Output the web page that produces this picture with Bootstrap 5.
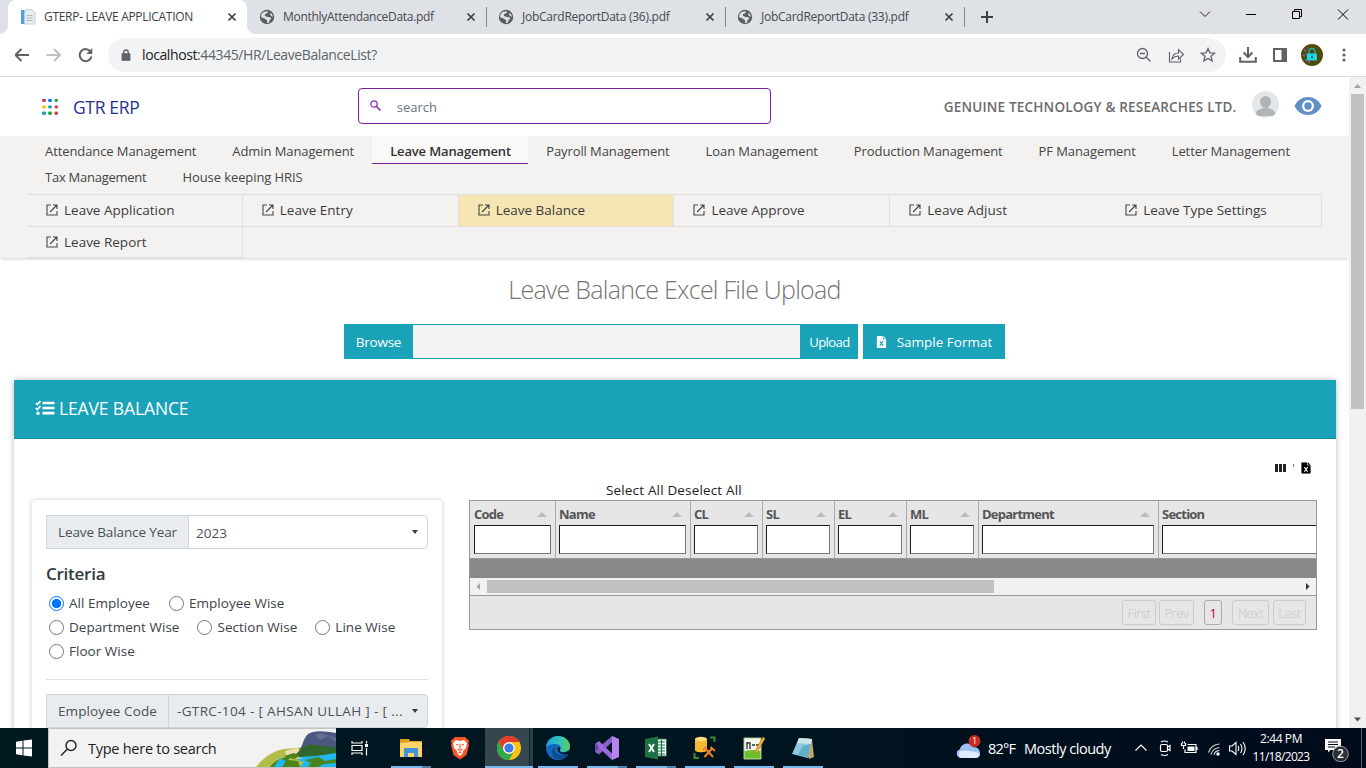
<!DOCTYPE html>
<html lang="en">
<head>
<meta charset="utf-8">
<meta name="viewport" content="width=device-width, initial-scale=1">
<title>GTERP- LEAVE APPLICATION</title>
<link href="https://cdn.jsdelivr.net/npm/bootstrap@5.3.0/dist/css/bootstrap.min.css" rel="stylesheet">
<style>
:root{--teal:#19a2b8}
body{font-family:"Open Sans","Noto Sans",sans-serif;height:768px;overflow:hidden;color:#333;font-size:13.5px;line-height:20px;background:#fff}
svg{display:block;flex:none}
.nowr{white-space:nowrap}
/* browser chrome */
.tabstrip{height:34px;background:#dee1e6;padding-left:8px}
.btab{width:239px;height:34px;padding:0 7px 0 12px;font-size:12px;letter-spacing:-.3px;color:#45494d;position:relative}
.btab.on{background:#fff;border-radius:8px 8px 0 0;color:#3c4043}
.btab.on::before,.btab.on::after{content:"";position:absolute;bottom:0;width:8px;height:8px;background:radial-gradient(circle at 0 0,transparent 7.5px,#fff 8px)}
.btab.on::before{left:-8px}
.btab.on::after{right:-8px;background:radial-gradient(circle at 100% 0,transparent 7.5px,#fff 8px)}
.btab.sep::after{content:"";position:absolute;right:-1px;top:7px;width:1px;height:20px;background:#85898e}
.winbtn{width:46px;height:28px}
.addressbar{height:43px;border-bottom:1px solid #dadce0}
.omni{margin-left:14px;width:1118px;height:34px;border-radius:17px;background:#f1f3f4;padding:0 10px 0 12px;font-size:14px;letter-spacing:-.4px;color:#5f6368}
.omni b{font-weight:400;color:#202124}
/* page */
.viewport{height:651px}
.vscroll{width:17px;background:#f1f1f1}
.vthumb{width:13px;height:315px;background:#c1c1c1}
.brand{font-size:17.5px;letter-spacing:-.35px;color:#27348b;margin-left:15px}
.topbar{height:59px}
.searchbox{width:413px;height:36px;border:1px solid #7b1fa2;border-radius:4px;padding-left:11px;margin:-2px 0 0 218.500px;font-size:13px;color:#6c757d}
.company{font-weight:600;letter-spacing:.19px;color:#6b6b6b;margin-left:173px;padding-top:1px}
.avatar{width:27px;height:27px;border-radius:50%;background:#e4e6e7;overflow:hidden}
.ribbon{background:#f3f2f1;height:122px;padding:0 27px;box-shadow:0 2px 3px -1px rgba(0,0,0,.2)}
.mods{padding-top:2px;height:58px;font-size:13px;letter-spacing:-.09px}
.mods a{height:26px;padding:3px 18px 0;color:#444;text-decoration:none;line-height:20px}
.mods a.on{height:28px;width:156px;margin-top:-2px;padding:5px 17px 0 18px;background:#faf9f8;border-bottom:1px solid #7b1fa2;font-weight:600;letter-spacing:-.15px;color:#333}
.mods a.tight{letter-spacing:-.25px}
.subs{display:grid;grid-template-columns:repeat(6,1fr);border-top:1px solid #e1dfdd}
.subs a{height:32px;padding:0 0 1px 19px;color:#3c3c3c;text-decoration:none;border-right:1px solid #e1dfdd;border-bottom:1px solid #e1dfdd}
.subs a svg{margin-right:2px}
.subs a:nth-child(n+7){height:31px;padding-bottom:0}
.subs a.on{background:#f5e6b3}
.bigtitle{font-size:25px;font-weight:300;letter-spacing:-.75px;color:#757575;line-height:34px;margin:14px 0 18px}
.tealbtn{background:var(--teal);color:#fff;height:35px;border-radius:0;border:0;padding:0;font-size:13.5px;line-height:20px;display:flex;align-items:center;justify-content:center}
.filefield{width:387px;height:35px;background:#f3f3f3;border:1px solid var(--teal);border-width:1px 0}
.maincard{margin:21px 13px 0 14px;height:400px;box-shadow:0 0 6px rgba(0,0,0,.28)}
.maincard .head{background:var(--teal);border-bottom:1px solid #1790a4;height:59px;padding:0 0 2px 21px;color:#fff;font-size:17.5px;letter-spacing:-.13px}
.filters{width:410px;height:300px;margin:61px 0 0 18px;padding:15px 14px;border-radius:4px;box-shadow:0 0 5px rgba(0,0,0,.22)}
.igroup{height:34px;border:1px solid #ced4da;border-radius:0 4px 4px 0;color:#495057}
.igroup .lab{background:#e9ecef;border-right:1px solid #ced4da;padding-left:11px}
.caret{width:0;height:0;border:3.5px solid transparent;border-top:4px solid #343a40;border-bottom:0;margin-right:1px}
.crit{font-size:17px;font-weight:600;letter-spacing:-.25px;color:#333a40;margin:13px 0 5px;line-height:24px}
.optrow{height:24px;padding-left:3px;color:#3d4247;letter-spacing:.03px}
.opt{display:flex;align-items:center;gap:5px}
.opt i{width:15px;height:15px;border:1px solid #767676;border-radius:50%;background:#fff}
.opt i.on{border-color:#0075ff;background:radial-gradient(circle,#0075ff 4.3px,#fff 5px)}
.gridbox{width:848px;height:130px;border:1px solid #999;background:#e6e6e6;overflow:hidden}
.gcol{flex:none;height:57px;border-right:1px solid #aaa;padding:3px 4px 0 3px;font-size:13px;font-weight:700;letter-spacing:-.76px;color:#555}
.gcol:first-child{padding-left:4px}
.gcol .inp{height:29px;margin-top:1px;background:#fff;border:1px solid #767676;border-top-color:#1d1d1d;border-left-color:#1d1d1d}
.sortup{width:0;height:0;border:5px solid transparent;border-bottom:5px solid #bbb;border-top:0;margin-right:4px;margin-top:1px}
.gempty{height:20px;background:#888;border-top:1px solid #999}
.ghs{height:17px;background:#f1f1f1}
.ghs .th{width:507px;height:13px;background:#c1c1c1}
.pgb{height:25px;border:1px solid #ccc;border-radius:3px;color:#c4c4c4;font-size:13px;font-weight:300;letter-spacing:-.4px;display:flex;align-items:center;justify-content:center}
.pgb.on{border-color:#aaa;color:#d00032;font-weight:400}
/* taskbar */
.taskbar{height:40px;background:linear-gradient(90deg,#001a22,#00141f 60%,#000a1b);color:#fff}
.tsearch{width:288px;height:40px;background:#f2f2f2;border:1px solid #c4c4c4;border-right:0;color:#222;font-size:14.5px;letter-spacing:-.26px;padding-left:11px;overflow:hidden}
.tapp{width:40px;height:40px;margin-left:9px;position:relative;display:flex;align-items:center;justify-content:center}
.tapp.run::after{content:"";position:absolute;left:0;right:0;bottom:0;height:2px;background:#76b9ed}
.tapp.multi::after{background:linear-gradient(90deg,#76b9ed 31px,#4f80a8 31px)}
.tapp.cur{width:48px;margin-left:5px;margin-right:-4px;background:linear-gradient(90deg,#35464e 44px,#16282f 44px,#16282f 45px,#2c3d46 45px)}
.clock{width:60px;font-size:12px;line-height:18px;text-align:center;letter-spacing:-.67px}
</style>
</head>
<body class="d-flex flex-column">
<svg width="0" height="0" class="position-absolute">
  <defs>
    <symbol id="globe" viewBox="0 0 16 16"><circle cx="8" cy="8" r="7.2" fill="#5a5e62"/><path d="M3 4.500C4.500 2.800 6.500 2 9 2.200L8.300 4.200 6.200 5l-.4 1.800L8.500 8l2.800.2 1 1.500-1.600 1.400-.7 2.400-2 .7.100-3L5 9.300 2.200 8.200C2 6.800 2.300 5.500 3 4.500zM10.500 4.300l2.300.4 1.300 3-2.100-.8z" fill="#dee1e6"/></symbol>
    <symbol id="tx" viewBox="0 0 16 16"><path d="M4.500 4.500l7 7M11.500 4.500l-7 7" stroke="#3c4043" stroke-width="1.700"/></symbol>
    <symbol id="ext" viewBox="0 0 12 12"><path d="M5 1H1v10h10V7M7 1h4v4M11 1L4 8" fill="none" stroke="#444" stroke-width="1.100"/></symbol>
    <symbol id="xls" viewBox="0 0 12 14"><path d="M1 0h6.500v3.800H11.500V13q0 1-1 1H1.500q-1 0-1-1V.8Q.5 0 1 0zM8.300 0l3.200 3H8.300z" fill="currentColor"/></symbol>
  </defs>
</svg>

<div class="tabstrip d-flex">
  <div class="btab on d-flex align-items-center">
    <svg width="16" height="16" viewBox="0 0 16 16"><rect x="1" y="1" width="3.500" height="14" fill="#4da3dc"/><path d="M6 .5h6l3 3V15H4.500V4z" fill="#e9eef2" stroke="#b9c1c8" stroke-width=".7"/><path d="M6.500 6.500h6M6.500 9h6M6.500 11.500h6" stroke="#a9b8c4"/></svg>
    <span class="nowr ms-2 me-auto">GTERP- LEAVE APPLICATION</span><svg width="16" height="16"><use href="#tx"/></svg></div>
  <div class="btab sep d-flex align-items-center"><svg width="16" height="16"><use href="#globe"/></svg><span class="nowr ms-2 me-auto">MonthlyAttendanceData.pdf</span><svg width="16" height="16"><use href="#tx"/></svg></div>
  <div class="btab sep d-flex align-items-center"><svg width="16" height="16"><use href="#globe"/></svg><span class="nowr ms-2 me-auto" style="letter-spacing:-.26px">JobCardReportData (36).pdf</span><svg width="16" height="16"><use href="#tx"/></svg></div>
  <div class="btab sep d-flex align-items-center"><svg width="16" height="16"><use href="#globe"/></svg><span class="nowr ms-2 me-auto" style="letter-spacing:-.26px">JobCardReportData (33).pdf</span><svg width="16" height="16"><use href="#tx"/></svg></div>
  <svg class="mt-2 ms-3" width="16" height="18" viewBox="0 0 16 18"><path d="M7 3v12M1 9h12" stroke="#3c4043" stroke-width="2"/></svg>
  <div class="d-flex ms-auto">
    <div class="winbtn"><svg width="46" height="28" viewBox="0 0 46 28"><path d="M18 11.500l5 5 5-5" fill="none" stroke="#222"/></svg></div>
    <div class="winbtn"><svg width="46" height="28" viewBox="0 0 46 28"><path d="M18 14.500h10" stroke="#000"/></svg></div>
    <div class="winbtn"><svg width="46" height="28" viewBox="0 0 46 28"><path d="M18.500 11.500h7v7h-7zM20.500 11V9.500h7v7H26" fill="none" stroke="#000"/></svg></div>
    <div class="winbtn"><svg width="46" height="28" viewBox="0 0 46 28"><path d="M18 9.500l10 10M28 9.500l-10 10" stroke="#000"/></svg></div>
  </div>
</div>

<div class="addressbar d-flex align-items-center">
  <svg style="margin-left:15px;margin-right:1px" width="78" height="20" viewBox="15.500 0 78 20"><path d="M29.500 10H16M22 4l-6 6 6 6" fill="none" stroke="#5f6368" stroke-width="2"/><path d="M47 10h13M54.500 4l6 6-6 6" fill="none" stroke="#bdc1c6" stroke-width="2"/><path d="M91.300 7A6 6 0 1 0 92 11.500" fill="none" stroke="#5f6368" stroke-width="2"/><path d="M92.800 3v6h-6z" fill="#5f6368"/></svg>
  <div class="omni d-flex align-items-center">
    <svg width="12" height="12" viewBox="0 0 12 14"><path d="M1.500 5.500h9V13h-9zM3.300 5.500V3.700a2.700 2.700 0 0 1 5.400 0v1.800" fill="#5f6368" stroke="#5f6368" stroke-width="1.300"/><path d="M4.200 5V3.700a1.800 1.800 0 0 1 3.600 0V5z" fill="#f1f3f4"/></svg>
    <span class="nowr me-auto" style="margin-left:10px"><b>localhost</b>:44345/HR/LeaveBalanceList?</span>
    <svg width="80" height="18" viewBox="0 0 80 18" fill="none" stroke="#5f6368" stroke-width="1.300"><circle cx="6.500" cy="7.500" r="5"/><path d="M10.200 11.200l4.300 4.300M4 7.500h5"/><path d="M33.500 6v10h11v-3.500M36 13c.5-4 3-6 6.500-6V3.500l5 5-5 4.500V10c-2.500-.1-4.500.7-6.500 3z" stroke-width="1.100"/><path d="M72 2.500l1.900 4.300 4.700.4-3.600 3.100 1.100 4.600L72 12.500l-4.100 2.400 1.100-4.600-3.600-3.100 4.700-.4z"/></svg>
  </div>
  <svg style="margin-left:13px" width="18" height="18" viewBox="0 0 18 18" fill="none" stroke="#5f6368" stroke-width="2"><path d="M9 1v9.500M4.500 6.500L9 11l4.500-4.500M1.200 11v4.800h15.600V11"/></svg>
  <svg class="ms-3" width="14" height="14" viewBox="0 0 14 14"><path d="M1 1h12v12H1z" fill="none" stroke="#5f6368" stroke-width="2"/><path d="M8.500 1H13v12H8.500z" fill="#5f6368"/></svg>
  <svg style="margin-left:14px" width="22" height="22" viewBox="0 0 22 22"><circle cx="11" cy="11" r="11" fill="#4f4a0a"/><path d="M3 6l2 1M2 11l2 1M4 15l2 2M7 18h2M6 4h1M5 10h1" stroke="#7d66b0" stroke-width="1.500"/><path d="M8 10V7.500a3 3 0 0 1 6 0V10" fill="none" stroke="#21a7b5" stroke-width="1.500"/><rect x="6" y="9.500" width="10" height="7" rx="1" fill="#16dcef"/><path d="M11 11.500v3" stroke="#184a52" stroke-width="1.500"/></svg>
  <svg style="margin-left:18px" width="6" height="16" viewBox="0 0 6 16" fill="#5f6368"><circle cx="3" cy="3" r="1.600"/><circle cx="3" cy="8" r="1.600"/><circle cx="3" cy="13" r="1.600"/></svg>
</div>

<div class="viewport d-flex overflow-hidden">
<main class="flex-grow-1 overflow-hidden">
  <div class="topbar d-flex align-items-center">
    <svg style="margin-left:42px" width="16" height="16" viewBox="0 0 16 16"><rect x="0" y="0" width="4" height="3" rx="1.400" fill="#dc3545"/><rect x="6" y="0" width="4" height="3" rx="1.400" fill="#007bff"/><rect x="12.500" y="0" width="3.500" height="3" rx="1.400" fill="#28a745"/><rect x="0" y="6.500" width="4" height="3" rx="1.400" fill="#ffc107"/><rect x="6" y="6.500" width="4" height="3" rx="1.400" fill="#17a2b8"/><rect x="12.500" y="6.500" width="3.500" height="3" rx="1.400" fill="#dc3545"/><rect x="0" y="12.500" width="4" height="3.500" rx="1.400" fill="#17a2b8"/><rect x="6" y="12.500" width="4" height="3.500" rx="1.400" fill="#28a745"/><rect x="12.500" y="12.500" width="3.500" height="3.500" rx="1.400" fill="#dc3545"/></svg>
    <span class="brand nowr">GTR ERP</span>
    <div class="searchbox d-flex align-items-center">
      <svg width="11" height="11" viewBox="0 0 11 11" fill="none" stroke="#8e35b5" stroke-width="1.300"><circle cx="4" cy="4" r="3.200"/><path d="M6.400 6.400l4 4" stroke-width="1.600"/></svg>
      <span style="margin-left:16px;padding-top:2px">search</span>
    </div>
    <span class="company nowr">GENUINE TECHNOLOGY &amp; RESEARCHES LTD.</span>
    <div class="avatar" style="margin:-5px 0 0 15px"><svg width="27" height="27" viewBox="0 0 27 27"><ellipse cx="13.500" cy="11" rx="5.500" ry="6" fill="#aeb4b8"/><path d="M4 25v-3c0-3 4-3.500 7-5h5c3 1.500 7 2 7 5v3z" fill="#aeb4b8"/></svg></div>
    <svg style="margin:-1px 0 0 15px" width="28" height="20" viewBox="0 0 28 20"><path d="M.5 10C6-2 22-2 27.500 10 22 22 6 22 .5 10z" fill="#5f8fc4"/><circle cx="14" cy="10" r="6" fill="#fff"/><circle cx="14" cy="10" r="3.700" fill="#5f8fc4"/></svg>
  </div>
  <nav class="ribbon">
    <div class="mods d-flex flex-wrap align-content-start nowr">
      <a href="#">Attendance Management</a><a href="#">Admin Management</a><a href="#" class="on">Leave Management</a><a href="#">Payroll Management</a><a href="#">Loan Management</a><a href="#">Production Management</a><a href="#">PF Management</a><a href="#">Letter Management</a><a href="#" class="tight">Tax Management</a><a href="#">House keeping HRIS</a>
    </div>
    <div class="subs">
      <a href="#" class="d-flex align-items-center gap-1"><svg width="12" height="12"><use href="#ext"/></svg>Leave Application</a>
      <a href="#" class="d-flex align-items-center gap-1"><svg width="12" height="12"><use href="#ext"/></svg>Leave Entry</a>
      <a href="#" class="on d-flex align-items-center gap-1"><svg width="12" height="12"><use href="#ext"/></svg>Leave Balance</a>
      <a href="#" class="d-flex align-items-center gap-1"><svg width="12" height="12"><use href="#ext"/></svg>Leave Approve</a>
      <a href="#" class="d-flex align-items-center gap-1 border-end-0"><svg width="12" height="12"><use href="#ext"/></svg>Leave Adjust</a>
      <a href="#" class="d-flex align-items-center gap-1"><svg width="12" height="12"><use href="#ext"/></svg>Leave Type Settings</a>
      <a href="#" class="d-flex align-items-center gap-1"><svg width="12" height="12"><use href="#ext"/></svg>Leave Report</a>
    </div>
  </nav>
  <h1 class="bigtitle text-center nowr">Leave Balance Excel File Upload</h1>
  <div class="d-flex justify-content-center">
    <button class="tealbtn" style="width:69px;letter-spacing:-.25px">Browse</button>
    <div class="filefield"></div>
    <button class="tealbtn" style="width:58px;font-size:13px;letter-spacing:-.55px;padding-left:1px">Upload</button>
    <button class="tealbtn" style="width:142px;margin-left:5px"><svg width="11" height="12" viewBox="0 0 12 14" style="margin-right:10px"><use href="#xls"/><path d="M4 6l4 5.500M8 6l-4 5.500" stroke="#19a2b8" stroke-width="1.200"/></svg>Sample Format</button>
  </div>
  <section class="maincard">
    <div class="head d-flex align-items-center">
      <svg width="20" height="16" viewBox="0 0 20 16" fill="none" stroke="#fff"><path d="M7.500 3h12M7.500 8h12M7.500 13.200h12" stroke-width="2.700"/><path d="M.8 3l1.500 1.500L5.500 1M.8 8l1.500 1.500L5.500 6" stroke-width="1.700"/><circle cx="3" cy="13.200" r="1.700" fill="#fff" stroke="none"/></svg>
      <span class="nowr" style="margin-left:4px">LEAVE BALANCE</span>
    </div>
    <div class="d-flex">
      <aside class="filters">
        <div class="igroup d-flex align-items-stretch">
          <div class="lab d-flex align-items-center nowr" style="width:142px;letter-spacing:-.12px">Leave Balance Year</div>
          <div class="d-flex align-items-center flex-grow-1 px-2"><span class="me-auto" style="margin-left:-1px;padding-top:1px">2023</span><span class="caret"></span></div>
        </div>
        <h2 class="crit">Criteria</h2>
        <div class="optrow d-flex"><div class="opt"><i class="on"></i>All Employee</div><div class="opt" style="margin-left:19px"><i></i>Employee Wise</div></div>
        <div class="optrow d-flex"><div class="opt"><i></i>Department Wise</div><div class="opt" style="margin-left:18px"><i></i>Section Wise</div><div class="opt" style="margin-left:18px"><i></i>Line Wise</div></div>
        <div class="optrow d-flex"><div class="opt"><i></i>Floor Wise</div></div>
        <div class="border-top" style="margin:16px 0 14px"></div>
        <div class="igroup d-flex align-items-stretch" style="background:#e9ecef">
          <div class="lab d-flex align-items-center nowr" style="width:122px;letter-spacing:.1px">Employee Code</div>
          <div class="d-flex align-items-center flex-grow-1 px-2 nowr"><span class="me-auto" style="letter-spacing:.35px">-GTRC-104 - [ AHSAN ULLAH ] - [ ...</span><span class="caret"></span></div>
        </div>
      </aside>
      <div style="margin:22px 0 0 27px">
        <div class="d-flex justify-content-end align-items-center" style="height:13px;padding-right:6px">
          <svg width="36" height="12" viewBox="0 0 36 12"><path d="M0 2h3v8H0zM4 2h3v8H4zM8 2h3v8H8z" fill="#222"/><path d="M18.500 2v3" stroke="#777"/><svg x="26" width="10" height="12" viewBox="0 0 12 14" color="#000"><use href="#xls"/><path d="M4 6l4 5.500M8 6l-4 5.500" stroke="#fff" stroke-width="1.300"/></svg></svg>
        </div>
        <div class="nowr" style="margin:6px 0 0 137px;letter-spacing:.16px;color:#222">Select All Deselect All</div>
        <div class="gridbox">
          <div class="d-flex">
            <div class="gcol" style="width:86px"><div class="d-flex align-items-center justify-content-between">Code<span class="sortup"></span></div><div class="inp"></div></div>
            <div class="gcol" style="width:135px"><div class="d-flex align-items-center justify-content-between">Name<span class="sortup"></span></div><div class="inp"></div></div>
            <div class="gcol" style="width:72px"><div class="d-flex align-items-center justify-content-between">CL<span class="sortup"></span></div><div class="inp"></div></div>
            <div class="gcol" style="width:72px"><div class="d-flex align-items-center justify-content-between">SL<span class="sortup"></span></div><div class="inp"></div></div>
            <div class="gcol" style="width:72px"><div class="d-flex align-items-center justify-content-between">EL<span class="sortup"></span></div><div class="inp"></div></div>
            <div class="gcol" style="width:72px"><div class="d-flex align-items-center justify-content-between">ML<span class="sortup"></span></div><div class="inp"></div></div>
            <div class="gcol" style="width:180px"><div class="d-flex align-items-center justify-content-between">Department<span class="sortup"></span></div><div class="inp"></div></div>
            <div class="gcol" style="width:180px"><div class="d-flex align-items-center justify-content-between">Section<span class="sortup"></span></div><div class="inp"></div></div>
          </div>
          <div class="gempty"></div>
          <div class="ghs d-flex align-items-center">
            <svg width="17" height="17" viewBox="0 0 17 17"><path d="M10 5v7L6.500 8.500z" fill="#a3a3a3"/></svg><div class="th"></div>
            <svg class="ms-auto" width="17" height="17" viewBox="0 0 17 17"><path d="M7 5v7l3.500-3.500z" fill="#333"/></svg>
          </div>
          <div class="d-flex justify-content-end" style="height:34px;border-top:1px solid #999;padding:4px 10px">
            <span class="pgb" style="width:34px">First</span><span class="pgb" style="width:35px;margin-left:3px">Prev</span><span class="pgb on" style="width:18px;margin-left:10px">1</span><span class="pgb" style="width:37px;margin-left:10px">Next</span><span class="pgb" style="width:33px;margin-left:4px">Last</span>
          </div>
        </div>
      </div>
    </div>
  </section>
</main>
<div class="vscroll d-flex flex-column align-items-center flex-shrink-0">
  <svg width="17" height="17" viewBox="0 0 17 17"><path d="M5 11h7L8.500 7z" fill="#a3a3a3"/></svg>
  <div class="vthumb"></div>
  <svg class="mt-auto" width="17" height="17" viewBox="0 0 17 17"><path d="M5 6.500h7l-3.500 4z" fill="#505050"/></svg>
</div>
</div>

<footer class="taskbar d-flex align-items-center">
  <svg width="48" height="40" viewBox="0 0 48 40" fill="#fff"><path d="M16 13.700l6.500-.9v6.700H16zM23.500 12.600l8.500-1.200v8.100h-8.500zM16 20.500h6.500v6.700l-6.500-.9zM23.500 20.500H32v8.100l-8.500-1.200z"/></svg>
  <div class="tsearch d-flex align-items-center">
    <svg width="18" height="18" viewBox="0 0 18 18" fill="none" stroke="#222" stroke-width="1.400"><circle cx="11" cy="6.500" r="5"/><path d="M7.500 10L1 16.500"/></svg>
    <span class="nowr me-auto" style="margin-left:10px;padding-top:2px">Type here to search</span>
    <svg width="80" height="38" viewBox="0 0 80 38">
      <path d="M0 38C6 30 16 22 28 20L50 18l30 3v17z" fill="#b5bd4a"/><path d="M14 38c4-6 12-10 22-11l-4 4 10 1 2 6z" fill="#4b8418"/>
      <path d="M18 38l6-9 6 3-4 6zM46 27l34-6v17H44l4-5-7-2z" fill="#22b6ef"/>
      <path d="M42 23c5-5 4-12 10-18 6-4 16-3 28-1v18l-20 2z" fill="#4c5782"/><path d="M51 10l8-4 5 5 8-4 8 6v-4L64 4z" fill="#76809f" opacity=".6"/>
      <path d="M36 23c8-2 12-7 20-8 8 3 16 1 24 4v5l-20 3-18 1z" fill="#31662c"/><path d="M29 22l12-3 3 2-6 6 10 3-9-1-9-3z" fill="#f0ddb0"/>
      <path d="M49 31l14-3 6 4 11-2v4l-12 1-6 3H52l3-4zM28 27l10-3 6 3-6 3z" fill="#47851d"/>
    </svg>
  </div>
  <div class="tapp" style="margin-left:4px"><svg width="18" height="16" viewBox="0 0 18 16" fill="none" stroke="#fff" stroke-width="1.200"><path d="M1 1v2h10V1M1 15v-2h10v2M1 5.500h10v5H1zM15.500 1v2.500M15.500 8v7.500"/><path d="M14 4h3v3h-3z" fill="#fff" stroke="none"/></svg></div>
  <div class="tapp run multi" style="margin-left:11px"><svg width="22" height="20" viewBox="0 0 22 20"><path d="M0 1h9l1 2h12v4H0z" fill="#e0a020"/><path d="M0 5l10-1h12v15H0z" fill="#ffd468"/><path d="M4 19v-8q0-1 1-1h12q1 0 1 1v8h-4v-4H8v4z" fill="#3f95dc"/></svg></div>
  <div class="tapp"><svg width="20" height="24" viewBox="0 0 20 24"><path d="M5 1h10l2.500 2.500L19 4l-.5 4 .5 1-2.500 10L10 23.500 3.500 19 1 9l.5-1L1 4l1.500-.5z" fill="#fb5427"/><path d="M10 5l4-1 3 3-1 5-3 3v2l-3 3-3-3v-2l-3-3-1-5 3-3z" fill="#fff"/><path d="M6 8.500l2.500.5M14 8.500l-2.500.5M10 8v5M7.500 13l2.500 1.500 2.500-1.500M8.500 17l1.500-1 1.500 1" fill="none" stroke="#fb5427" stroke-width="1.100"/></svg></div>
  <div class="tapp run cur"><svg width="24" height="24" viewBox="0 0 24 24"><circle cx="12" cy="12" r="12" fill="#fbc116"/><path d="M1.600 6A12 12 0 0 1 22.400 6H12a6 6 0 0 0-5.200 9z" fill="#e33b2e"/><path d="M1.600 6A12 12 0 0 0 12 24l5.200-9A6 6 0 0 1 6.800 15z" fill="#2da94f"/><circle cx="12" cy="12" r="5.800" fill="#fff"/><circle cx="12" cy="12" r="4.600" fill="#3a7be8"/></svg></div>
  <div class="tapp run"><svg width="24" height="24" viewBox="0 0 24 24"><defs><linearGradient id="eg"><stop stop-color="#20a5df"/><stop offset=".6" stop-color="#35c1b8"/><stop offset="1" stop-color="#5ad155"/></linearGradient></defs><circle cx="12" cy="12" r="12" fill="#1268bd"/><path d="M0 11C1 4 6 0 12 0c7 0 12 5 12 10 0 4-3 6-7 6-2 0-3.500-1-3-2 1.500-2 1-6-5-6-4 0-7 1-9 3z" fill="url(#eg)"/><path d="M10 10c-3 3-1 9 6 9 3 0 5-1 7-2l-2 3c-3 3-7 4-11 3-5-3-6-10 0-13z" fill="#0c4c91"/><path d="M14 14c-1 1 1 3 5 2.500l5-2.500-.5 3.500c-6 2.500-12-.5-12-4.500 0-2 2-2 3-1.500z" fill="#00151f"/></svg></div>
  <div class="tapp run multi"><svg width="24" height="24" viewBox="0 0 24 24"><path d="M17 0l7 3v18l-7 3z" fill="#b783ef"/><path d="M17 0v6L4 18.500 0 16v-3L3 12z" fill="#8661c5"/><path d="M0 8l4-3 13 12.500V24z" fill="#9a6be0"/><path d="M0 8v8l3-3V9z" fill="#684aa5"/></svg></div>
  <div class="tapp run multi"><svg width="22" height="24" viewBox="0 0 22 24"><path d="M12 3h9.500v17H12z" fill="#fff" stroke="#1d7044"/><path d="M13 6h7M13 9h7M13 12h7M13 15h7M13 18h7M16.500 4v16" stroke="#1d7044" stroke-width="1.200"/><path d="M0 3l13-2.500v23L0 21z" fill="#1d7044"/><path d="M4 8l5 8M9 8l-5 8" stroke="#fff" stroke-width="1.900"/></svg></div>
  <div class="tapp run"><svg width="24" height="24" viewBox="0 0 24 24"><path d="M2 3v11c0 3 12 3 12 0V3z" fill="#f5b82e"/><ellipse cx="8" cy="3" rx="6" ry="2.200" fill="#ffdc7b"/><path d="M17 1.500h4.500V6M1.500 17v5H6" fill="none" stroke="#3f8a35" stroke-width="2"/><path d="M12 12l8 9M19.500 12l-8 9M9.500 14l4-3M17.500 11l4.500 4" stroke="#f08024" stroke-width="2"/></svg></div>
  <div class="tapp run"><svg width="24" height="24" viewBox="0 0 24 24"><path d="M2 2h17v21H2z" fill="#f5f7ee" stroke="#aac58d"/><path d="M2.500 15q8-2 16 0v7.500h-16z" fill="#6bc12d"/><path d="M5 6v7M5 7h3v6M10 9h3M14 9h3" stroke="#333" stroke-width="1.400" fill="none"/><path d="M21 1l2 1.500-8 14-2.500 1.500.5-3z" fill="#f2b632" stroke="#a36b20" stroke-width=".6"/></svg></div>
  <div class="tapp run"><svg width="24" height="24" viewBox="0 0 24 24"><path d="M9 2l12 1 2 18-5 2z" fill="#c1a36b"/><path d="M8 2l13 1-4 19L1 18z" fill="#8ccbdd"/><path d="M8 2l13 1-1 5L6 7z" fill="#cfe4ec"/><path d="M12 10l8-2-3 13-10-2z" fill="#4fa4bd" opacity=".7"/></svg></div>

  <div class="d-flex align-items-center ms-auto nowr" style="font-size:14.5px">
    <svg width="25" height="26" viewBox="0 0 25 26"><path d="M5 23a4.500 4.500 0 0 1-1-8.800C5 8 14 6 17 12c5 0 7 3 7 6 0 3-2 5-5 5z" fill="#9fc0f5"/><path d="M5 23a4.500 4.500 0 0 1-1-7c5-1 16 0 20 3-1 3-2 4-5 4z" fill="#e0ebfd"/><circle cx="18.500" cy="6" r="6" fill="#cb2c20"/><text x="18.500" y="9.300" font-size="9" text-anchor="middle" fill="#fff">1</text></svg>
    <span style="width:28px;margin-left:7px;letter-spacing:-.8px;padding-top:1px">82°F</span><span style="width:87px;margin-left:8px;letter-spacing:-.47px;padding-top:1px">Mostly cloudy</span>
    <svg style="margin-left:24px" width="112" height="20" viewBox="0 0 112 20" fill="none" stroke="#fff" stroke-width="1.200"><path d="M.5 12.500L6 7l5.500 5.500"/><rect x="25.500" y="6.500" width="7" height="7" rx="1.500"/><path d="M32.500 9l2.500-1.500v5L32.500 11M26 4q3.500-2 7 0M26 16.500q3.500 2 7 0"/><path d="M52.500 6.500h8.500v8H50v-3M62 9v3"/><path d="M52.500 8.500h7V13h-7z" fill="#fff" stroke="none"/><path d="M46.500 5v2.500h4V5M47.500 3.500v2M49.500 3.500v2M48.500 7v4" stroke-width="1.200"/><path d="M73.500 14.500C75 10 79 6.500 84.500 6M76 16.500C77 12.500 80 10 84.500 9.500M79 17c.5-2.500 2.500-4.300 5.500-4.600" stroke="#ccc" stroke-width="1.100"/><circle cx="83" cy="16" r="1.700" fill="#fff" stroke="none"/><path d="M94.500 8v5h2.500l4 3.500v-12L97 8zM103 8q1.500 2.500 0 5M105.500 6q3 4.500 0 9M108 4q4.500 6.500 0 13" stroke-width="1.100"/></svg>
    <div class="clock ms-1"><div style="letter-spacing:-.4px">2:44 PM</div><div>11/18/2023</div></div>
    <svg style="margin-left:14px" width="26" height="28" viewBox="0 0 26 28"><path d="M0 5h16v11H5.500L3 18.500V16H0z" fill="#fff"/><path d="M3 8h10M3 10.500h10M3 13h7" stroke="#000c1c"/><circle cx="15.500" cy="20" r="7.800" fill="#2b2f36" stroke="#9a9da1"/><text x="15.500" y="24.300" font-size="12" font-weight="600" text-anchor="middle" fill="#fff">2</text></svg>
    <div style="width:1px;height:40px;background:#55606c;margin:0 4px 0 10px"></div>
  </div>
</footer>
<script src="https://cdn.jsdelivr.net/npm/bootstrap@5.3.0/dist/js/bootstrap.bundle.min.js"></script>
</body>
</html>
